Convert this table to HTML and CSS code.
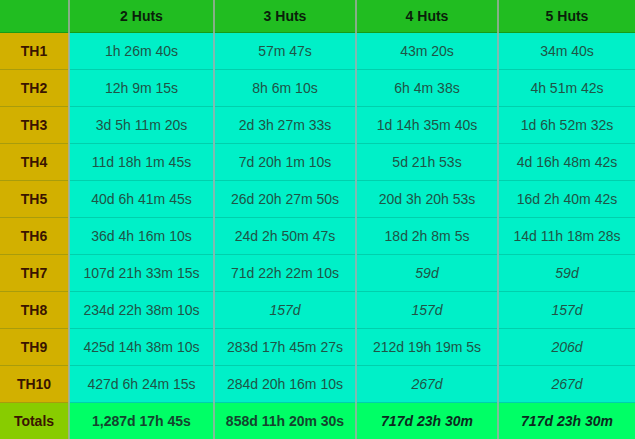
FILE: index.html
```html
<!DOCTYPE html>
<html>
<head>
<meta charset="utf-8">
<link rel="stylesheet" href="styles.css">
</head>
<body>
<table class="huts">
  <colgroup>
    <col class="c-th"><col class="c-2"><col class="c-3"><col class="c-4"><col class="c-5">
  </colgroup>
  <thead>
    <tr><th class="corner"></th><th>2 Huts</th><th>3 Huts</th><th>4 Huts</th><th>5 Huts</th></tr>
  </thead>
  <tbody>
    <tr><th class="lvl">TH1</th><td>1h 26m 40s</td><td>57m 47s</td><td>43m 20s</td><td>34m 40s</td></tr>
    <tr><th class="lvl">TH2</th><td>12h 9m 15s</td><td>8h 6m 10s</td><td>6h 4m 38s</td><td>4h 51m 42s</td></tr>
    <tr><th class="lvl">TH3</th><td>3d 5h 11m 20s</td><td>2d 3h 27m 33s</td><td>1d 14h 35m 40s</td><td>1d 6h 52m 32s</td></tr>
    <tr><th class="lvl">TH4</th><td>11d 18h 1m 45s</td><td>7d 20h 1m 10s</td><td>5d 21h 53s</td><td>4d 16h 48m 42s</td></tr>
    <tr><th class="lvl">TH5</th><td>40d 6h 41m 45s</td><td>26d 20h 27m 50s</td><td>20d 3h 20h 53s</td><td>16d 2h 40m 42s</td></tr>
    <tr><th class="lvl">TH6</th><td>36d 4h 16m 10s</td><td>24d 2h 50m 47s</td><td>18d 2h 8m 5s</td><td>14d 11h 18m 28s</td></tr>
    <tr><th class="lvl">TH7</th><td>107d 21h 33m 15s</td><td>71d 22h 22m 10s</td><td class="it">59d</td><td class="it">59d</td></tr>
    <tr><th class="lvl">TH8</th><td>234d 22h 38m 10s</td><td class="it">157d</td><td class="it">157d</td><td class="it">157d</td></tr>
    <tr><th class="lvl">TH9</th><td>425d 14h 38m 10s</td><td>283d 17h 45m 27s</td><td>212d 19h 19m 5s</td><td class="it">206d</td></tr>
    <tr><th class="lvl">TH10</th><td>427d 6h 24m 15s</td><td>284d 20h 16m 10s</td><td class="it">267d</td><td class="it">267d</td></tr>
  </tbody>
  <tfoot>
    <tr><th class="lvl tot">Totals</th><td>1,287d 17h 45s</td><td>858d 11h 20m 30s</td><td class="it">717d 23h 30m</td><td class="it">717d 23h 30m</td></tr>
  </tfoot>
</table>
</body>
</html>
```

FILE: styles.css
```css
html, body {
  margin: 0;
  padding: 0;
  background: #00f0c8;
}
.huts {
  width: 635px;
  border-collapse: collapse;
  table-layout: fixed;
  font-family: "Liberation Sans", Arial, sans-serif;
  font-size: 14px;
}
.c-th { width: 69px; }
.c-2 { width: 145px; }
.c-3 { width: 142px; }
.c-4 { width: 142px; }
.c-5 { width: 137px; }
.huts th, .huts td {
  text-align: center;
  padding: 0;
  border-left: 2px solid rgba(170, 170, 170, 0.75);
}
.huts tr > :first-child { border-left: none; }
.huts thead th {
  height: 32px;
  background: #21bd21;
  color: #0a1f0a;
  font-weight: bold;
  border-bottom: 1px solid #179c17;
}
.huts tbody td, .huts tbody th {
  height: 36px;
  border-bottom: 1px solid rgba(0, 80, 60, 0.2);
}
.huts tbody td {
  background: #00f0c8;
  color: #1f5446;
}
.huts th.lvl {
  background: #d2b000;
  color: #3a1400;
  font-weight: bold;
}
.huts td.it { font-style: italic; }
.huts tfoot td, .huts tfoot th {
  height: 36px;
}
.huts tfoot td {
  background: #00ff66;
  color: #14452e;
  font-weight: bold;
}
.huts tfoot td.it { color: #0c2a1e; }
.huts th.tot {
  background: #88cc00;
  color: #3a1400;
}
```
